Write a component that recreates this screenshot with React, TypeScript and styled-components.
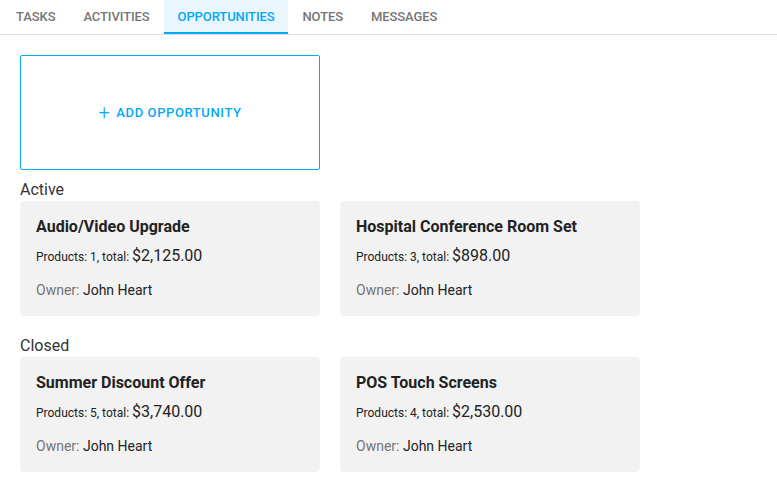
import * as React from "react";
import styled, { createGlobalStyle } from "styled-components";

const GlobalStyle = createGlobalStyle`
  body {
    margin: 0;
    background: #fff;
    font-family: Roboto, "Liberation Sans", sans-serif;
    color: #333;
  }
`;

interface Opportunity {
  name: string;
  products: number;
  total: string;
  owner: string;
}

const active: Opportunity[] = [
  { name: "Audio/Video Upgrade", products: 1, total: "$2,125.00", owner: "John Heart" },
  { name: "Hospital Conference Room Set", products: 3, total: "$898.00", owner: "John Heart" },
];

const closed: Opportunity[] = [
  { name: "Summer Discount Offer", products: 5, total: "$3,740.00", owner: "John Heart" },
  { name: "POS Touch Screens", products: 4, total: "$2,530.00", owner: "John Heart" },
];

const tabs = ["Tasks", "Activities", "Opportunities", "Notes", "Messages"];

function OpportunityCard({ item }: { item: Opportunity }) {
  return (
    <Card>
      <CardTitle>{item.name}</CardTitle>
      <Totals>
        Products: {item.products}, total: <Price>{item.total}</Price>
      </Totals>
      <Owner>
        Owner: <OwnerName>{item.owner}</OwnerName>
      </Owner>
    </Card>
  );
}

export default function App() {
  return (
    <>
      <GlobalStyle />
      <TabBar>
        {tabs.map((tab) => (
          <Tab key={tab} $active={tab === "Opportunities"}>
            {tab}
          </Tab>
        ))}
      </TabBar>
      <Content>
        <AddButton>
          <Plus>+</Plus> Add Opportunity
        </AddButton>
        <GroupLabel $first>Active</GroupLabel>
        <CardRow>
          {active.map((o) => (
            <OpportunityCard key={o.name} item={o} />
          ))}
        </CardRow>
        <GroupLabel>Closed</GroupLabel>
        <CardRow>
          {closed.map((o) => (
            <OpportunityCard key={o.name} item={o} />
          ))}
        </CardRow>
      </Content>
    </>
  );
}

const TabBar = styled.div`
  display: flex;
  padding-left: 2px;
  height: 34px;
  border-bottom: 1px solid #e0e0e0;
`;

const Tab = styled.div<{ $active?: boolean }>`
  display: flex;
  align-items: center;
  padding: 0 14px 2px;
  font-size: 13px;
  font-weight: 500;
  letter-spacing: -0.1px;
  text-transform: uppercase;
  color: ${(p) => (p.$active ? "#03a9f4" : "#757575")};
  background: ${(p) => (p.$active ? "#e9f6fe" : "transparent")};
  box-shadow: ${(p) => (p.$active ? "inset 0 -2px 0 #03a9f4" : "none")};
`;

const Content = styled.div`
  padding: 20px 20px 0;
`;

const AddButton = styled.div`
  box-sizing: border-box;
  width: 300px;
  height: 115px;
  border: 1px solid #03a9f4;
  border-radius: 2px;
  display: flex;
  align-items: center;
  justify-content: center;
  gap: 6px;
  color: #03a9f4;
  font-size: 13px;
  font-weight: 500;
  letter-spacing: 0.6px;
  text-transform: uppercase;
`;

const Plus = styled.span`
  font-size: 20px;
  font-weight: 300;
  line-height: 1;
  margin-top: -2px;
`;

const GroupLabel = styled.div<{ $first?: boolean }>`
  margin-top: ${(p) => (p.$first ? "10px" : "20px")};
  height: 20px;
  line-height: 20px;
  font-size: 16px;
  color: #333;
`;

const CardRow = styled.div`
  display: flex;
  gap: 20px;
  margin-top: 1px;
`;

const Card = styled.div`
  box-sizing: border-box;
  width: 300px;
  height: 115px;
  background: #f2f2f2;
  border-radius: 4px;
  padding: 16px 16px 0;
`;

const CardTitle = styled.div`
  font-size: 16px;
  font-weight: 700;
  line-height: 19px;
  color: #222;
`;

const Totals = styled.div`
  margin-top: 10px;
  font-size: 12px;
  line-height: 20px;
  color: #222;
`;

const Price = styled.span`
  font-size: 16px;
`;

const Owner = styled.div`
  margin-top: 14px;
  font-size: 14px;
  line-height: 18px;
  color: #757575;
`;

const OwnerName = styled.span`
  color: #222;
`;
